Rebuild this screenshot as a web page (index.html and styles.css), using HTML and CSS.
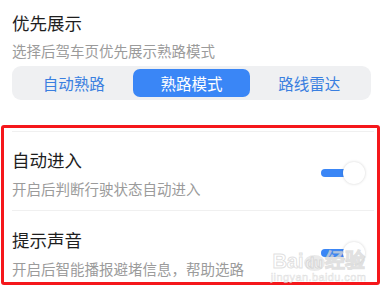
FILE: index.html
```html
<!DOCTYPE html>
<html lang="zh-CN">
<head>
<meta charset="utf-8">
<link rel="stylesheet" href="styles.css">
</head>
<body>
<section class="pref">
  <h2 class="title">优先展示</h2>
  <p class="desc">选择后驾车页优先展示熟路模式</p>
  <div class="seg">
    <span class="seg-item">自动熟路</span>
    <span class="seg-item active">熟路模式</span>
    <span class="seg-item">路线雷达</span>
  </div>
</section>
<div class="highlight">
  <div class="row first">
    <div class="text">
      <h2 class="title">自动进入</h2>
      <p class="desc">开启后判断行驶状态自动进入</p>
    </div>
    <span class="toggle"><span class="track"></span><span class="knob"></span></span>
  </div>
  <div class="row second">
    <div class="text">
      <h2 class="title">提示声音</h2>
      <p class="desc">开启后智能播报避堵信息，帮助选路</p>
    </div>
    <span class="toggle"><span class="track"></span><span class="knob"></span></span>
  </div>
  <div class="watermark"><span class="wm-big">Bai<span class="wm-du">du</span>经验</span><span class="wm-small">jingyan.baidu.com</span></div>
</div>
</body>
</html>
```

FILE: styles.css
```css
* { box-sizing: border-box; }
html, body { margin: 0; padding: 0; background: #fff; }
body {
  width: 389px;
  height: 294px;
  overflow: hidden;
  font-family: "Noto Sans CJK SC", "Noto Sans", sans-serif;
  color: #222;
}
.title {
  margin: 0;
  font-size: 17.5px;
  line-height: 24px;
  font-weight: 400;
  color: #1e1e1e;
}
.desc {
  margin: 0;
  font-size: 14.5px;
  line-height: 20px;
  color: #9b9b9b;
}
.pref {
  padding: 11px 18px 0 12px;
  height: 125px;
}
.pref .desc { margin-top: 6px; }
.seg {
  margin-top: 5px;
  height: 34px;
  padding: 3px;
  border-radius: 9px;
  background: #eff0f2;
  display: grid;
  grid-template-columns: 1fr 1fr 1fr;
}
.seg-item {
  display: flex;
  align-items: center;
  justify-content: center;
  font-size: 15.5px;
  color: #3a7fe0;
  border-radius: 7px;
}
.seg-item.active {
  background: #3a86f6;
  color: #fff;
}
.highlight {
  position: relative;
  margin-left: 1px;
  width: 379px;
  height: 160px;
  border: 3px solid #f5171b;
  border-radius: 3px;
  padding: 3px 3px 3px 8px;
}
.row {
  display: flex;
  align-items: center;
  justify-content: space-between;
  border-top: 1px solid #f0f0f0;
}
.row.first { padding: 16px 0 11px; }
.row.second { padding: 17px 0 0; }
.row .desc { margin-top: 7px; }
.toggle {
  position: relative;
  width: 44px;
  height: 22px;
  margin-right: 9px;
  margin-top: -2px;
}
.track {
  position: absolute;
  left: 0;
  top: 7px;
  width: 34px;
  height: 8px;
  border-radius: 4px;
  background: #3a86f6;
}
.knob {
  position: absolute;
  right: 0;
  top: 0;
  width: 22px;
  height: 22px;
  border-radius: 50%;
  background: #fff;
  box-shadow: 0 0 3px rgba(0,0,0,0.18);
}
.watermark {
  position: absolute;
  left: 267px;
  top: 124px;
  width: 95px;
  display: flex;
  flex-direction: column;
  align-items: center;
  color: rgba(255,255,255,0.65);
  pointer-events: none;
}
.wm-big {
  font-family: "Liberation Sans", sans-serif;
  font-size: 20px;
  font-weight: 700;
  line-height: 19px;
  -webkit-text-stroke: 1px rgba(175,175,175,0.4);
  white-space: nowrap;
}
.wm-du {
  display: inline-block;
  background: rgba(195,195,195,0.35);
  border-radius: 50%;
  padding: 0 2px;
  font-size: 14px;
  line-height: 16px;
}
.wm-small {
  margin-top: 1px;
  font-family: "Liberation Sans", sans-serif;
  font-size: 11px;
  line-height: 11px;
  letter-spacing: 0.4px;
  -webkit-text-stroke: 0.6px rgba(175,175,175,0.4);
  white-space: nowrap;
}
```
